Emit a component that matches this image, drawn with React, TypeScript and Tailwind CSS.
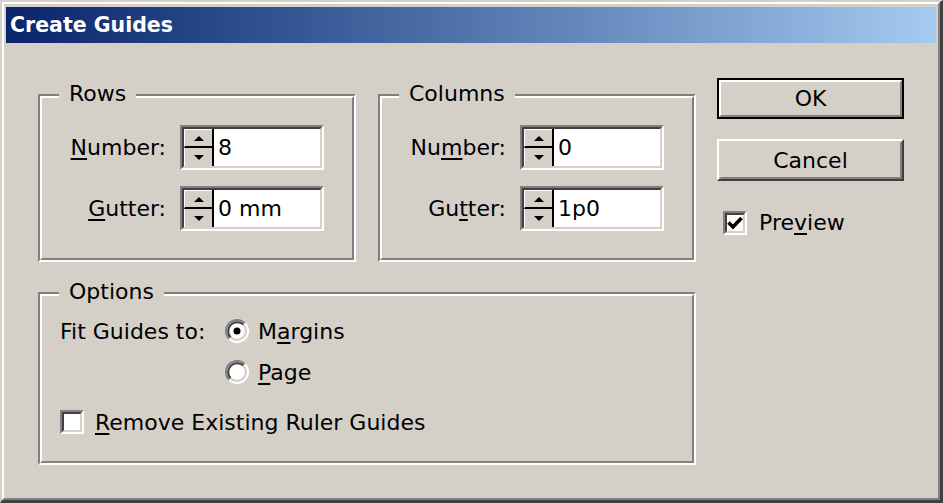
import React from "react";

const U = ({ children }: { children: React.ReactNode }) => (
  <span className="underline decoration-[2px] underline-offset-[3px]">{children}</span>
);

function Group({
  label,
  className,
  children,
}: {
  label: string;
  className: string;
  children: React.ReactNode;
}) {
  return (
    <div
      className={`relative border-t-2 border-l-2 border-r-2 border-b-2 border-t-[#808080] border-l-[#808080] border-r-white border-b-white ${className}`}
    >
      <div className="h-full border-t-2 border-l-2 border-r-2 border-b-2 border-t-white border-l-white border-r-[#808080] border-b-[#808080]">
        {children}
      </div>
      <span className="absolute left-[19px] top-[-15px] bg-[#d4d0c8] px-[10px] text-[22px] leading-[26px] text-black">
        {label}
      </span>
    </div>
  );
}

function SpinArrow({ up }: { up: boolean }) {
  return (
    <svg width="10" height="5" viewBox="0 0 10 5">
      {up ? <polygon points="0,5 5,0 10,5" fill="#000" /> : <polygon points="0,0 10,0 5,5" fill="#000" />}
    </svg>
  );
}

function Spinner({ value }: { value: string }) {
  return (
    <div className="h-[45px] w-[144px] border-t-2 border-l-2 border-r-2 border-b-2 border-t-[#808080] border-l-[#808080] border-r-white border-b-white">
      <div className="flex h-full border-t-2 border-l-2 border-r-2 border-b-2 border-t-[#404040] border-l-[#404040] border-r-[#d4d0c8] border-b-[#d4d0c8] bg-white">
        <div className="flex w-[30px] flex-col border-r-2 border-black bg-[#d4d0c8]">
          <div className="flex h-[19px] items-center justify-center border-t border-l border-t-white border-l-white border-b-2 border-b-black">
            <SpinArrow up />
          </div>
          <div className="flex flex-1 items-center justify-center border-l border-l-white">
            <SpinArrow up={false} />
          </div>
        </div>
        <div className="flex items-center pl-[4px] text-[22px] leading-none text-black">{value}</div>
      </div>
    </div>
  );
}

function FieldRow({ label, value }: { label: React.ReactNode; value: string }) {
  return (
    <div className="flex items-center">
      <div className="w-[124px] text-right text-[22px] text-black">{label}</div>
      <div className="ml-[14px]">
        <Spinner value={value} />
      </div>
    </div>
  );
}

function Checkbox({ checked }: { checked: boolean }) {
  return (
    <div className="h-[24px] w-[24px] shrink-0 border-t-2 border-l-2 border-r-2 border-b-2 border-t-[#808080] border-l-[#808080] border-r-white border-b-white">
      <div className="flex h-full items-center justify-center border-t-2 border-l-2 border-r-2 border-b-2 border-t-[#404040] border-l-[#404040] border-r-[#d4d0c8] border-b-[#d4d0c8] bg-white">
        {checked && (
          <svg width="16" height="16" viewBox="0 0 16 16">
            <polyline points="1.5,7.5 6,12 14.5,3" fill="none" stroke="#000" strokeWidth="3.6" />
          </svg>
        )}
      </div>
    </div>
  );
}

function Radio({ checked }: { checked: boolean }) {
  return (
    <svg width="24" height="24" viewBox="0 0 24 24" className="shrink-0">
      <circle cx="12" cy="12" r="9" fill="#fff" />
      <path d="M4.22 19.78 A11 11 0 0 1 19.78 4.22" fill="none" stroke="#808080" strokeWidth="2" />
      <path d="M19.78 4.22 A11 11 0 0 1 4.22 19.78" fill="none" stroke="#ffffff" strokeWidth="2" />
      <path d="M5.64 18.36 A9 9 0 0 1 18.36 5.64" fill="none" stroke="#404040" strokeWidth="2" />
      <path d="M18.36 5.64 A9 9 0 0 1 5.64 18.36" fill="none" stroke="#d4d0c8" strokeWidth="2" />
      {checked && <circle cx="12" cy="12" r="3.5" fill="#000" />}
    </svg>
  );
}

export default function App() {
  return (
    <div
      className="h-[503px] w-[943px] bg-[#d4d0c8] text-black"
      style={{ fontFamily: '"DejaVu Sans", Verdana, sans-serif' }}
    >
      <div className="h-full border-t-2 border-l-2 border-r-[3px] border-b-[3px] border-t-[#d4d0c8] border-l-[#d4d0c8] border-r-[#404040] border-b-[#404040]">
        <div className="flex h-full flex-col border-t-2 border-l-2 border-r-2 border-b-2 border-t-white border-l-white border-r-[#808080] border-b-[#808080] px-[2px] pt-[3px] pb-[2px]">
          <div className="flex h-[36px] items-center bg-gradient-to-r from-[#0a246a] to-[#a6caf0] pl-[4px]">
            <span className="text-[20.5px] font-bold text-white">Create Guides</span>
          </div>
          <div className="flex flex-1 items-start">
            <div className="ml-[32px] mt-[51px] flex flex-col gap-[30px]">
              <div className="flex gap-[22px]">
                <Group label="Rows" className="h-[168px] w-[318px]">
                  <div className="flex flex-col gap-[16px] pt-[27px]">
                    <FieldRow label={<><U>N</U>umber:</>} value="8" />
                    <FieldRow label={<><U>G</U>utter:</>} value="0 mm" />
                  </div>
                </Group>
                <Group label="Columns" className="h-[168px] w-[318px]">
                  <div className="flex flex-col gap-[16px] pt-[27px]">
                    <FieldRow label={<>Nu<U>m</U>ber:</>} value="0" />
                    <FieldRow label={<>Gu<U>t</U>ter:</>} value="1p0" />
                  </div>
                </Group>
              </div>
              <Group label="Options" className="h-[173px] w-[658px]">
                <div className="flex flex-col pl-[18px] pt-[20px] text-[22px]">
                  <div className="flex h-[30px] items-center">
                    <div className="w-[165px]">Fit Guides to:</div>
                    <Radio checked />
                    <span className="ml-[9px]">
                      M<U>a</U>rgins
                    </span>
                  </div>
                  <div className="mt-[11px] flex h-[30px] items-center">
                    <div className="w-[165px]" />
                    <Radio checked={false} />
                    <span className="ml-[9px]">
                      <U>P</U>age
                    </span>
                  </div>
                  <div className="mt-[20px] flex h-[30px] items-center">
                    <Checkbox checked={false} />
                    <span className="ml-[11px]">
                      <U>R</U>emove Existing Ruler Guides
                    </span>
                  </div>
                </div>
              </Group>
            </div>
            <div className="ml-[21px] mt-[35px] flex w-[187px] flex-col">
              <div className="h-[41px] border-2 border-black">
                <div className="flex h-full items-center justify-center border-t-2 border-l-2 border-r-2 border-b-2 border-t-white border-l-white border-r-[#808080] border-b-[#808080] text-[22px]">
                  OK
                </div>
              </div>
              <div className="mt-[20px] h-[42px] border-t-2 border-l-2 border-r-2 border-b-2 border-t-white border-l-white border-r-[#404040] border-b-[#404040]">
                <div className="flex h-full items-center justify-center border-t-2 border-l-2 border-r-2 border-b-2 border-t-[#d4d0c8] border-l-[#d4d0c8] border-r-[#808080] border-b-[#808080] text-[22px]">
                  Cancel
                </div>
              </div>
              <div className="ml-[6px] mt-[25px] flex items-center">
                <Checkbox checked />
                <span className="ml-[12px] text-[22px]">
                  Pre<U>v</U>iew
                </span>
              </div>
            </div>
          </div>
        </div>
      </div>
    </div>
  );
}
